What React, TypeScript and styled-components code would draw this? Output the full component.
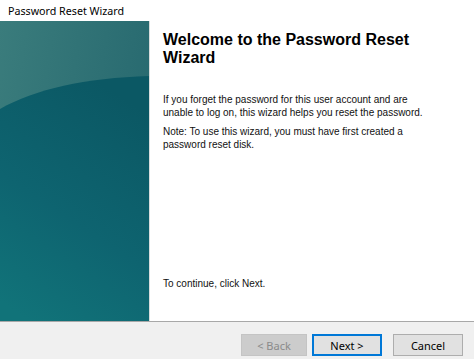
import React from 'react'
import styled, { createGlobalStyle } from 'styled-components'

const GlobalStyle = createGlobalStyle`
  html, body, #root {
    margin: 0;
    padding: 0;
    height: 100%;
  }
  body {
    background: #ffffff;
    font-family: 'Liberation Sans', Arial, sans-serif;
    color: #000000;
  }
`

const Window = styled.div`
  display: flex;
  flex-direction: column;
  width: 474px;
  height: 359px;
  background: #ffffff;
  overflow: hidden;
`

const TitleBar = styled.div`
  height: 21px;
  flex-shrink: 0;
  display: flex;
  align-items: center;
  padding-left: 8px;
  font-family: 'Noto Sans', 'Open Sans', sans-serif;
  font-size: 10.7px;
  color: #000000;
`

const Body = styled.div`
  display: flex;
  height: 300px;
  flex-shrink: 0;
`

const SidePanel = styled.div`
  width: 150px;
  height: 100%;
  flex-shrink: 0;
  border-right: 1px solid #d8dcdc;
  box-sizing: border-box;

  svg {
    display: block;
  }
`

const Content = styled.div`
  display: flex;
  flex-direction: column;
  width: 270px;
  padding: 10px 0 31px 13px;
`

const Heading = styled.h1`
  margin: 0 0 26px;
  font-family: 'Liberation Sans', Arial, sans-serif;
  font-size: 16px;
  line-height: 18px;
  font-weight: bold;
`

const Text = styled.p<{ $bottom?: boolean }>`
  margin: 0 0 6px;
  font-size: 10px;
  line-height: 13px;
  color: #111111;
  ${(p) => (p.$bottom ? 'margin-top: auto; margin-bottom: 0;' : '')}
`

const Footer = styled.div`
  flex: 1;
  display: flex;
  justify-content: flex-end;
  align-items: flex-start;
  padding: 12px 11px 0 0;
  background: #f0f0f0;
  border-top: 1px solid #a8a8a8;
`

const Button = styled.button<{ $variant?: 'default' | 'disabled' }>`
  width: 70px;
  height: 22px;
  margin-left: ${(p) => (p.$variant === 'default' ? '5px' : '11px')};
  padding: 0;
  font-family: 'Noto Sans', 'Open Sans', sans-serif;
  font-size: 11px;
  background: ${(p) => (p.$variant === 'disabled' ? '#cccccc' : '#e1e1e1')};
  color: ${(p) => (p.$variant === 'disabled' ? '#8a8a8a' : '#000000')};
  border: ${(p) =>
    p.$variant === 'default' ? '2px solid #0078d7' : p.$variant === 'disabled' ? '1px solid #c4c4c4' : '1px solid #adadad'};
  box-sizing: border-box;
  cursor: default;

  &:first-child {
    margin-left: 0;
    width: 66px;
  }
`

const PanelArt = () => (
  <svg width="149" height="300" viewBox="0 0 149 300">
    <defs>
      <linearGradient id="top" x1="0" y1="0" x2="1" y2="0.3">
        <stop offset="0" stopColor="#3a7c7c" />
        <stop offset="1" stopColor="#286a70" />
      </linearGradient>
      <linearGradient id="low" x1="0.6" y1="0" x2="0.2" y2="1">
        <stop offset="0" stopColor="#0b5864" />
        <stop offset="0.55" stopColor="#0e6470" />
        <stop offset="1" stopColor="#117379" />
      </linearGradient>
    </defs>
    <rect width="149" height="300" fill="url(#top)" />
    <path d="M0,88 C35,68 85,57 149,55 L149,300 L0,300 Z" fill="url(#low)" />
  </svg>
)

export default function App() {
  return (
    <>
      <GlobalStyle />
      <Window>
        <TitleBar>Password Reset Wizard</TitleBar>
        <Body>
          <SidePanel>
            <PanelArt />
          </SidePanel>
          <Content>
            <Heading>Welcome to the Password Reset Wizard</Heading>
            <Text>
              If you forget the password for this user account and are unable to log on, this wizard helps you
              reset the password.
            </Text>
            <Text>Note: To use this wizard, you must have first created a password reset disk.</Text>
            <Text $bottom>To continue, click Next.</Text>
          </Content>
        </Body>
        <Footer>
          <Button $variant="disabled">&lt; Back</Button>
          <Button $variant="default">Next &gt;</Button>
          <Button>Cancel</Button>
        </Footer>
      </Window>
    </>
  )
}
